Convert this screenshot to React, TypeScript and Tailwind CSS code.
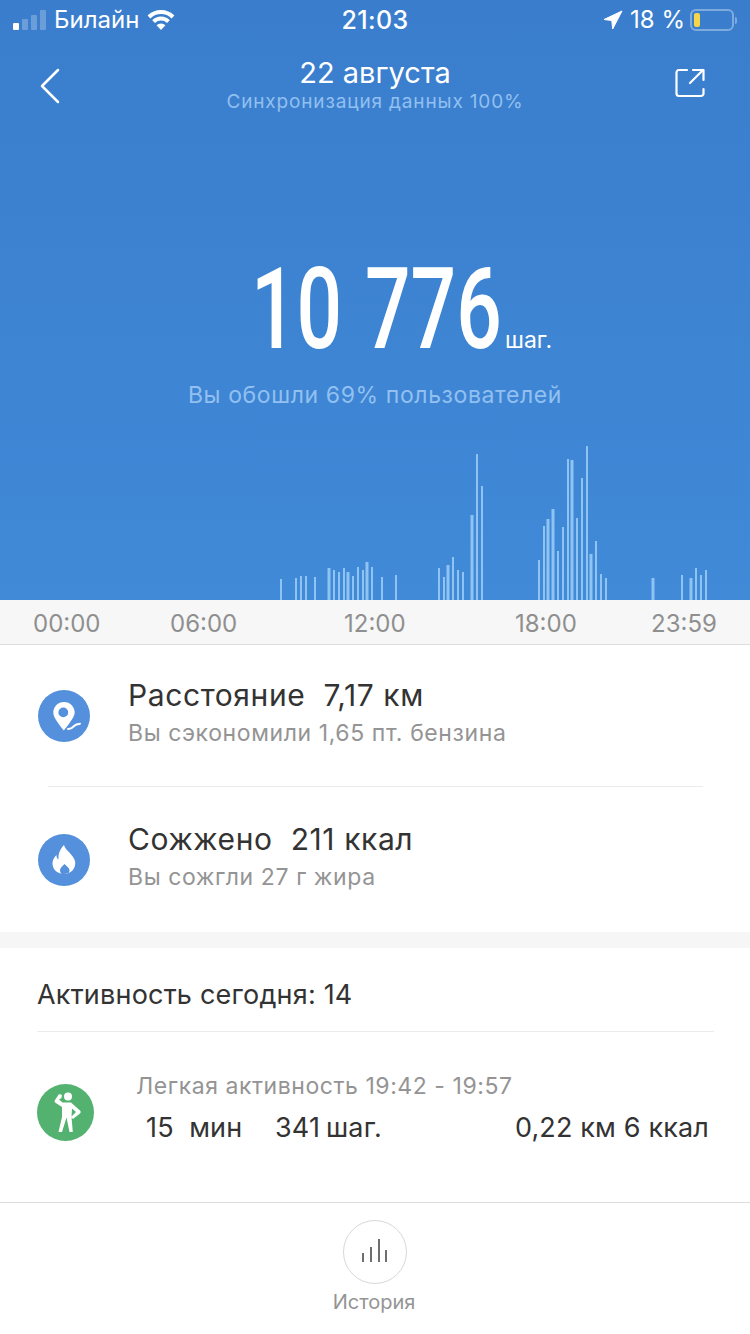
// [x, height, width]
const bars: [number, number, number][] = [
  [281, 21, 2], [296, 22, 2], [301, 24, 2], [306, 24, 2], [315, 23, 2],
  [329, 32, 3], [334, 30, 2], [339, 28, 2], [344, 32, 2], [348, 28, 3],
  [353, 24, 2], [358, 33, 2], [363, 30, 2], [367, 38, 3], [372, 33, 2],
  [382, 23, 2], [396, 25, 2], [439, 32, 2], [444, 23, 2], [448, 35, 3],
  [453, 43, 2], [458, 30, 2], [463, 28, 2], [472, 85, 3], [477, 146, 2],
  [482, 114, 2], [539, 40, 2], [544, 74, 2], [548, 81, 3], [553, 91, 3],
  [558, 49, 2], [563, 73, 2], [568, 141, 2], [572, 140, 3], [577, 82, 2],
  [582, 122, 2], [587, 154, 2], [591, 46, 3], [596, 59, 2], [601, 26, 2],
  [606, 22, 2], [653, 22, 3], [682, 25, 2], [691, 22, 3], [696, 32, 2],
  [701, 25, 2], [706, 30, 2],
]

function StatusBar() {
  return (
    <div className="flex h-10 items-center justify-between px-[13px] text-white text-[24px] leading-none">
      <div className="flex items-center w-[250px]">
        <div className="flex items-end gap-[3px] h-[20px] mr-[8px]">
          <span className="w-[6px] h-[7px] rounded-[1px] bg-white" />
          <span className="w-[6px] h-[11px] rounded-[1px] bg-white/25" />
          <span className="w-[6px] h-[15px] rounded-[1px] bg-white/25" />
          <span className="w-[6px] h-[20px] rounded-[1px] bg-white/25" />
        </div>
        <span>Билайн</span>
        <svg className="ml-[7px]" width="30" height="22" viewBox="0 0 30 22" fill="none" stroke="white" strokeWidth="4">
          <path d="M3 8a17 17 0 0 1 24 0" />
          <path d="M7.600 12.600a10.500 10.500 0 0 1 14.800 0" />
          <path fill="white" stroke="none" d="M15 21l-4.500-4.700a6.300 6.300 0 0 1 9 0z" />
        </svg>
      </div>
      <span className="font-medium text-[25px] tracking-[0.4px]">21:03</span>
      <div className="flex items-center justify-end w-[250px]">
        <svg width="20" height="20" viewBox="0 0 20 20" fill="white">
          <path d="M19 1 1 9.500l7.800 1 .9 8.500z" stroke="white" strokeLinejoin="round" />
        </svg>
        <span className="ml-[7px] text-[24px]">18 %</span>
        <div className="ml-[5px] flex items-center">
          <div className="w-[44px] h-[22px] rounded-[6px] border-2 border-white/35 p-[2px]">
            <div className="w-[6px] h-full rounded-[2px] bg-[#f4d648]" />
          </div>
          <span className="ml-[1px] w-[2px] h-[7px] rounded-r bg-white/35" />
        </div>
      </div>
    </div>
  )
}

function NavBar() {
  return (
    <div className="relative h-[74px] flex flex-col items-center">
      <button className="absolute left-[40px] top-[28px]">
        <svg width="20" height="36" viewBox="0 0 20 36" fill="none" stroke="white" strokeWidth="2.500" strokeLinecap="round" strokeLinejoin="round">
          <path d="M18 2 2 18l16 16" />
        </svg>
      </button>
      <button className="absolute left-[675px] top-[28px]">
        <svg width="30" height="30" viewBox="0 0 30 30" fill="none" stroke="white" strokeWidth="2.200" strokeLinecap="round" strokeLinejoin="round">
          <path d="M12 2H4a2.500 2.500 0 0 0-2.500 2.500V25.500A2.500 2.500 0 0 0 4 28h22a2.500 2.500 0 0 0 2.500-2.500V21" />
          <path d="M15 15 28 2" />
          <path d="M18 2h10.500v10" />
        </svg>
      </button>
      <div className="mt-[15px] text-white text-[29px] leading-[36px]">22 августа</div>
      <div className="text-[#92c0f0] text-[19px] leading-[22px] tracking-[0.85px]">Синхронизация данных 100%</div>
    </div>
  )
}

function StepsHero() {
  return (
    <div className="mt-[136px] flex flex-col items-center">
      <div className="relative h-[120px] w-full">
        <div className="absolute left-[251px] top-[10px] origin-left scale-x-[0.71] font-['Roboto',sans-serif] font-medium text-white text-[113px] leading-[100px] [word-spacing:4px] whitespace-nowrap">
          10 776
        </div>
        <div className="absolute left-[505px] top-[77px] text-white text-[23px] leading-[26px]">шаг.</div>
      </div>
      <div className="mt-[10px] text-[#92c0f0] text-[23px] leading-[30px] tracking-[0.6px]">Вы обошли 69% пользователей</div>
    </div>
  )
}

function StatRow({ title, value, sub, icon, height }: { title: string; value: string; sub: string; icon: React.ReactNode; height: string }) {
  return (
    <div className={`flex items-center pl-[38px] ${height}`}>
      <div className="w-[52px] h-[52px] rounded-full bg-[#5590dd] flex items-center justify-center">{icon}</div>
      <div className="ml-[38px] mt-[-2px]">
        <div className="text-[#333333] text-[30px] leading-[38px] tracking-[0.6px] whitespace-pre">{title}  {value}</div>
        <div className="text-[#949494] text-[23px] leading-[39px] tracking-[0.6px]">{sub}</div>
      </div>
    </div>
  )
}

export default function App() {
  return (
    <div className="w-[750px] h-[1334px] bg-white overflow-hidden font-['Inter',sans-serif]">
      <div className="h-[600px] bg-gradient-to-b from-[#3a7dcd] to-[#408ad8] flex flex-col relative">
        <StatusBar />
        <NavBar />
        <StepsHero />
        <svg className="absolute left-0 bottom-0" width="750" height="160" viewBox="0 0 750 160">
          {bars.map(([x, h, w]) => (
            <rect key={x} x={x - w / 2} y={160 - h} width={w} height={h} fill="#8ec3f2" />
          ))}
        </svg>
      </div>

      <div className="h-[45px] bg-[#f7f7f7] border-b border-[#dddddd] flex items-center pl-[33px] pt-[3px] text-[#8f8f8f] text-[24px]">
        <span className="w-[137px]">00:00</span>
        <span className="w-[174px]">06:00</span>
        <span className="w-[171px]">12:00</span>
        <span className="w-[136px]">18:00</span>
        <span>23:59</span>
      </div>

      <StatRow
        height="h-[141px]"
        title="Расстояние"
        value="7,17 км"
        sub="Вы сэкономили 1,65 пт. бензина"
        icon={
          <svg width="40" height="40" viewBox="0 0 40 40">
            <path fillRule="evenodd" fill="white" d="M20 6c-6 0-10.700 4.700-10.700 10.500 0 3 1.700 6 3.700 9 2 3 4.800 6.500 6.800 9 1.400-1.700 3.200-3.800 4.900-6.200 2.700-3.800 6-8.500 6-11.800C30.700 10.700 26 6 20 6zm-.7 5.500a4.900 4.900 0 1 1 0 9.800 4.900 4.900 0 0 1 0-9.800z" />
            <path fill="none" stroke="white" strokeWidth="2" strokeLinecap="round" d="M24 33c3 .4 4.500-1.500 6-3 1.700-1.600 3-2 6-2.300" />
          </svg>
        }
      />
      <div className="h-px ml-[48px] mr-[47px] bg-[#ececec]" />
      <StatRow
        height="h-[145px]"
        title="Сожжено"
        value="211 ккал"
        sub="Вы сожгли 27 г жира"
        icon={
          <svg width="30" height="32" viewBox="0 0 30 32">
            <path fill="white" fillRule="evenodd" d="M15 1c1 5 9 9 11 16 1.500 7-4 13-11 13S3 25 3.500 18.500C4 15 6 12.500 7.500 11c0 2 .5 3.500 2 4.500C9 10 11 5 15 1zm.5 19c-2.500 2.500-4.500 4-4.500 6.500 0 1.500 1 3 2 3.500h5c1.500-.5 2.500-2 2.500-3.500 0-2.500-2.500-4-5-6.500z" />
          </svg>
        }
      />
      <div className="h-[16px] bg-[#f6f6f6]" />

      <div className="pl-[37px] pr-[36px]">
        <div className="h-[84px] flex items-center border-b border-[#ececec] text-[#333333] text-[27px] tracking-[0.2px] pt-[11px]">
          Активность сегодня: 14
        </div>
        <div className="h-[170px] relative">
          <div className="absolute left-0 top-[52px] w-[57px] h-[57px] rounded-full bg-[#54b270] flex items-center justify-center">
            <svg width="40" height="46" viewBox="0 0 40 46" fill="white">
              <circle cx="22" cy="6.500" r="4" />
              <path d="M13 4 16 5 15.500 8 13 9.500 16.500 12.500H25L34.500 21Q35 22.500 34 23.500L27 29 25 27 30 22 26 18.500 25.500 27 26.800 42H23.500L20.500 27.500 16 42H12.500L16 27V17L9 12.500Q8 11 9 10z" />
            </svg>
          </div>
          <div className="pl-[99px] pt-[41px] text-[#949494] text-[23px] leading-[26px] tracking-[0.55px]">Легкая активность 19:42 - 19:57</div>
          <div className="flex items-center justify-between pl-[109px] pr-[5px] text-[#333333] text-[27px] tracking-[0.15px] leading-[38px] mt-[10px]">
            <div className="flex">
              <span className="w-[129px] whitespace-pre">15  мин</span>
              <span className="w-[51px]">341</span>
              <span>шаг.</span>
            </div>
            <span className="whitespace-pre">0,22 км 6 ккал</span>
          </div>
        </div>
      </div>

      <div className="border-t border-[#dddddd] flex flex-col items-center pt-[17px]">
        <div className="w-[64px] h-[64px] rounded-full border border-[#d8d8d8] flex items-center justify-center">
          <svg width="30" height="26" viewBox="0 0 30 26" fill="none" stroke="#6e6e6e" strokeWidth="2">
            <path d="M3 14v9M11 8v15M19 0v23M26 11v12" />
          </svg>
        </div>
        <div className="mt-[5px] text-[#949494] text-[20px] leading-[26px] mr-[2px]">История</div>
      </div>
    </div>
  )
}
